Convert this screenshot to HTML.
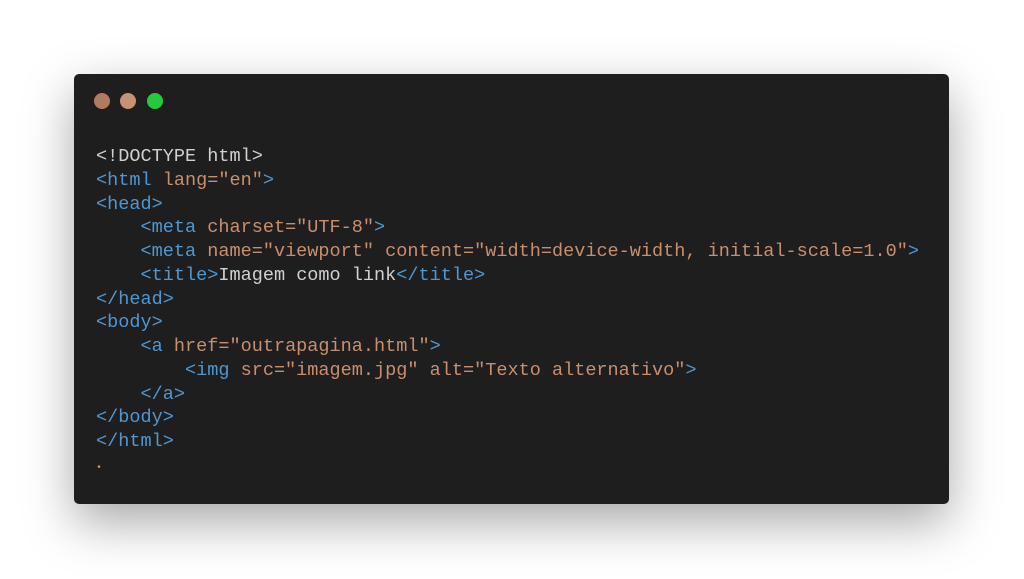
<!DOCTYPE html>
<html><head><style>
body{margin:0;width:1024px;height:579px;background:#fff;overflow:hidden;position:relative}
.card{position:absolute;left:74px;top:74px;width:875px;height:430px;background:#1e1e1e;border-radius:5px;box-shadow:0 18px 50px rgba(0,0,0,.35)}
.d{position:absolute;top:93px;width:16px;height:16px;border-radius:50%}
pre{position:absolute;left:96px;top:145px;margin:0;font-family:"Liberation Mono",monospace;font-size:18.55px;line-height:23.75px;color:#d0d0d0}
.t{color:#4f97d1}.a{color:#c98f6d}.w{color:#d0d0d0}
</style></head><body>
<div class="card"></div>
<div class="d" style="left:94px;background:#b27a5e"></div>
<div class="d" style="left:120px;background:#c79271"></div>
<div class="d" style="left:147px;background:#28c83c"></div>
<pre><span class="w">&lt;!DOCTYPE html&gt;</span>
<span class="t">&lt;html</span> <span class="a">lang="en"</span><span class="t">&gt;</span>
<span class="t">&lt;head&gt;</span>
    <span class="t">&lt;meta</span> <span class="a">charset="UTF-8"</span><span class="t">&gt;</span>
    <span class="t">&lt;meta</span> <span class="a">name="viewport" content="width=device-width, initial-scale=1.0"</span><span class="t">&gt;</span>
    <span class="t">&lt;title&gt;</span>Imagem como link<span class="t">&lt;/title&gt;</span>
<span class="t">&lt;/head&gt;</span>
<span class="t">&lt;body&gt;</span>
    <span class="t">&lt;a</span> <span class="a">href="outrapagina.html"</span><span class="t">&gt;</span>
        <span class="t">&lt;img</span> <span class="a">src="imagem.jpg" alt="Texto alternativo"</span><span class="t">&gt;</span>
    <span class="t">&lt;/a&gt;</span>
<span class="t">&lt;/body&gt;</span>
<span class="t">&lt;/html&gt;</span>
<span class="a" style="font-size:10px">•</span></pre>
</body></html>
